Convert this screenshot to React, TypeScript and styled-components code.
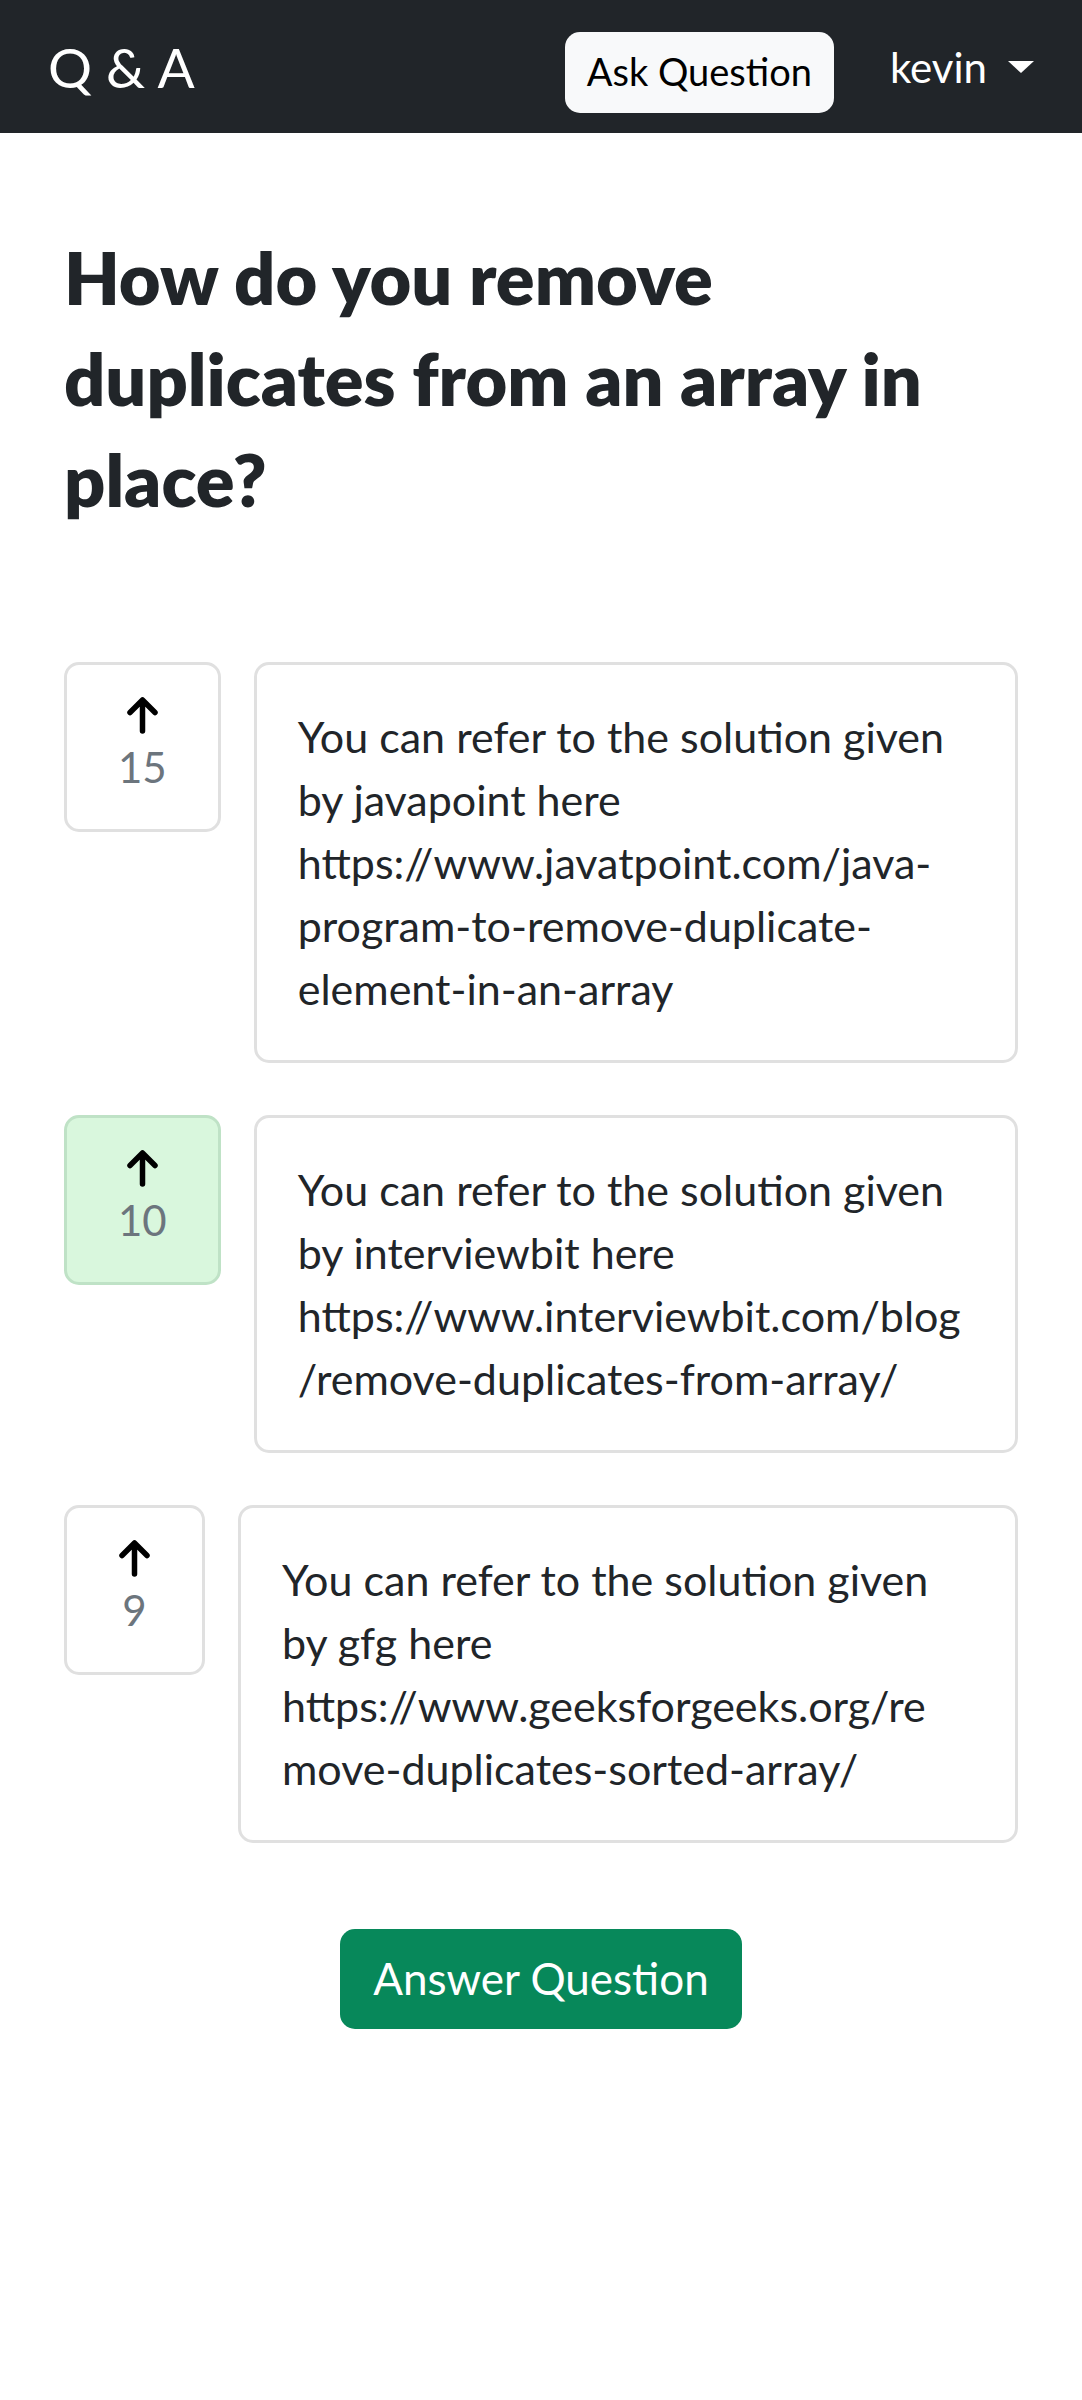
import styled, { createGlobalStyle } from "styled-components";

const GlobalStyle = createGlobalStyle`
  html, body {
    margin: 0;
    padding: 0;
    background: #fff;
  }
  body {
    font-family: Lato, "Liberation Sans", sans-serif;
    color: #212529;
  }
  * {
    box-sizing: border-box;
  }
`;

// top navigation bar
const NavBar = styled.nav`
  height: 133px;
  background-color: #212529;
  display: flex;
  align-items: center;
  padding: 12px 48px 0 48px;
`;

const Brand = styled.div`
  font-size: 55px;
  line-height: 55px;
  color: #fff;
  margin-bottom: 11px;
  margin-inline-end: auto;
`;

const AskButton = styled.button`
  height: 81px;
  padding: 0 22px 4px;
  border: none;
  border-radius: 15px;
  background-color: #f8f9fa;
  color: #000;
  font-family: inherit;
  font-size: 38px;
  line-height: 58px;
  display: flex;
  align-items: center;
`;

const UserMenu = styled.div`
  display: inline-flex;
  align-items: center;
  margin-left: 56px;
  margin-bottom: 10px;
  font-size: 42px;
  line-height: 63px;
  color: #fff;
  &::after {
    content: "";
    margin-left: 21px;
    border-top: 12px solid #fff;
    border-left: 13px solid transparent;
    border-right: 13px solid transparent;
    margin-bottom: 2px;
  }
`;

// page body
const Main = styled.main`
  padding: 94px 64px 120px;
`;

const Title = styled.h1`
  margin: 0 0 132px;
  font-size: 72px;
  line-height: 101px;
  font-weight: 800;
  color: #212529;
`;

const AnswerList = styled.div`
  display: flex;
  flex-direction: column;
  gap: 52px;
`;

const AnswerRow = styled.div`
  display: flex;
  align-items: flex-start;
  gap: 33px;
`;

const VoteBox = styled.div<{ $voted?: boolean }>`
  flex: none;
  display: flex;
  flex-direction: column;
  align-items: center;
  padding: 32px 51px 30px;
  border: 3px solid ${(p) => (p.$voted ? "#bfe2c6" : "#e0e0e0")};
  border-radius: 15px;
  background-color: ${(p) => (p.$voted ? "#d9f7dd" : "#fff")};
`;

const VoteInner = styled.div`
  min-width: 33px;
  display: flex;
  flex-direction: column;
  align-items: center;
`;

const ArrowIcon = styled.svg`
  display: block;
  width: 33px;
  height: 38px;
  margin: -1px 0 2px;
`;

const VoteCount = styled.div`
  font-size: 42px;
  line-height: 63px;
  color: #6c757d;
`;

const AnswerCard = styled.div`
  flex: 1;
  padding: 40px 41px;
  border: 3px solid #e0e0e0;
  border-radius: 15px;
  font-size: 43px;
  line-height: 63px;
  white-space: pre-line;
  overflow-wrap: anywhere;
  color: #212529;
`;

const Footer = styled.div`
  display: flex;
  justify-content: center;
  margin-top: 86px;
`;

const AnswerButton = styled.button`
  height: 100px;
  padding: 0 33px 2px;
  border: none;
  border-radius: 15px;
  background-color: #07885a;
  color: #fff;
  font-family: inherit;
  font-size: 44px;
  line-height: 66px;
`;

type Answer = {
  id: number;
  votes: number;
  voted: boolean;
  lines: string[];
};

const answers: Answer[] = [
  {
    id: 1,
    votes: 15,
    voted: false,
    lines: [
      "You can refer to the solution given",
      "by javapoint here",
      "https://www.javatpoint.com/java-",
      "program-to-remove-duplicate-",
      "element-in-an-array",
    ],
  },
  {
    id: 2,
    votes: 10,
    voted: true,
    lines: [
      "You can refer to the solution given",
      "by interviewbit here",
      "https://www.interviewbit.com/blog",
      "/remove-duplicates-from-array/",
    ],
  },
  {
    id: 3,
    votes: 9,
    voted: false,
    lines: [
      "You can refer to the solution given",
      "by gfg here",
      "https://www.geeksforgeeks.org/re",
      "move-duplicates-sorted-array/",
    ],
  },
];

const UpArrow = () => (
  <ArrowIcon viewBox="0 0 33 38" fill="none">
    <path
      d="M16.5 35V4.5M4 16.5L16.5 4L29 16.5"
      stroke="#000"
      strokeWidth="5.5"
      strokeLinecap="round"
      strokeLinejoin="round"
    />
  </ArrowIcon>
);

const App = () => {
  return (
    <>
      <GlobalStyle />
      <NavBar>
        <Brand>Q &amp; A</Brand>
        <AskButton>Ask Question</AskButton>
        <UserMenu>kevin</UserMenu>
      </NavBar>
      <Main>
        <Title>How do you remove duplicates from an array in place?</Title>
        <AnswerList>
          {answers.map((a) => (
            <AnswerRow key={a.id}>
              <VoteBox $voted={a.voted}>
                <VoteInner>
                  <UpArrow />
                  <VoteCount>{a.votes}</VoteCount>
                </VoteInner>
              </VoteBox>
              <AnswerCard>{a.lines.join("\n")}</AnswerCard>
            </AnswerRow>
          ))}
        </AnswerList>
        <Footer>
          <AnswerButton>Answer Question</AnswerButton>
        </Footer>
      </Main>
    </>
  );
};

export default App;
